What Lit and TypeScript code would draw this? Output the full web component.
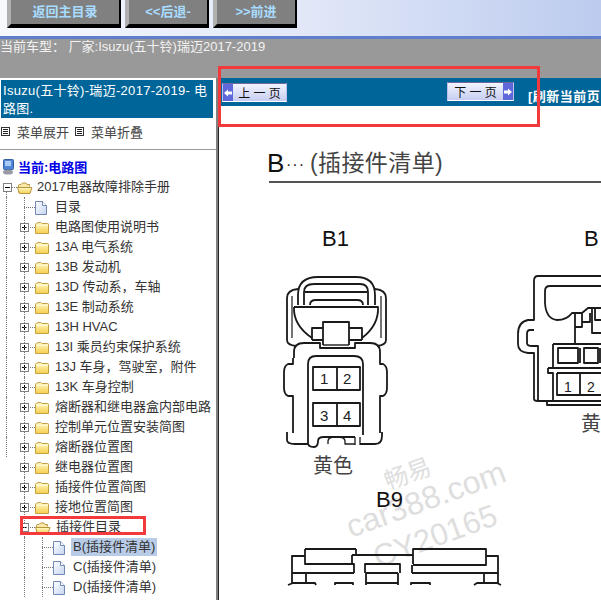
import { LitElement, html, css, svg } from "lit";
import { customElement } from "lit/decorators.js";

const folder = (open: boolean) => svg`<svg class="ic" width=${open ? 16 : 14} height="15" viewBox="0 0 ${open ? 16 : 14} 15">
  <defs><linearGradient id="fg" x1="0" y1="0" x2="0" y2="1"><stop offset="0" stop-color="#fff9c8"/><stop offset="1" stop-color="#f8cf4e"/></linearGradient></defs>
  ${open
    ? svg`<path d="M1.5 12.5V5.5Q1.5 4.5 2.5 4.5H4L5.5 3H9L10 4.5H12.5V6.5" fill="#f8e9a8" stroke="#b8963f"/><path d="M.5 7.5H15L13 13.5H2.5Z" fill="url(#fg)" stroke="#b8963f"/>`
    : svg`<path d="M.5 4.5Q.5 3.5 1.5 3.5L3 2.5H6L7 3.5H12.5Q13.5 3.5 13.5 4.5V13.5H.5Z" fill="url(#fg)" stroke="#c4a040"/><path d="M1.5 5.5H12.5" stroke="#fffbd8"/>`}
</svg>`;

const doc = svg`<svg class="ic" width="12" height="15" viewBox="0 0 12 15">
  <defs><linearGradient id="dg" x1="0" y1="0" x2="1" y2="1"><stop offset="0" stop-color="#ffffff"/><stop offset="1" stop-color="#c4d4f0"/></linearGradient></defs>
  <path d="M.5 1.5H7.5L11.5 5.5V14.5H.5Z" fill="url(#dg)" stroke="#7088b8"/><path d="M7.5 1.5V5.5H11.5" fill="#fff" stroke="#7088b8"/>
</svg>`;

const menuIcon = svg`<svg class="ic" width="9" height="9" viewBox="0 0 9 9"><rect x=".5" y=".5" width="8" height="8" fill="#fff" stroke="#333"/><path d="M2 2.5H7M2 4.5H7M2 6.5H7" stroke="#222"/></svg>`;

const exp = (open: boolean) => svg`<svg class="exp" width="9" height="9" viewBox="0 0 9 9"><rect x=".5" y=".5" width="8" height="8" fill="#fff" stroke="#808080"/><path d=${open ? "M2 4.5H7" : "M2 4.5H7M4.5 2V7"} stroke="#000"/></svg>`;

const l1: [string, boolean][] = [
  ["电路图使用说明书", true], ["13A 电气系统", true], ["13B 发动机", true], ["13D 传动系，车轴", true],
  ["13E 制动系统", true], ["13H HVAC", true], ["13I 乘员约束保护系统", true], ["13J 车身，驾驶室，附件", true],
  ["13K 车身控制", true], ["熔断器和继电器盒内部电路", true], ["控制单元位置安装简图", true], ["熔断器位置图", true],
  ["继电器位置图", false], ["插接件位置简图", false], ["接地位置简图", false],
];

@customElement("app-root")
export class AppRoot extends LitElement {
  static styles = css`
    :host { display: block; width: 601px; height: 600px; overflow: hidden; position: relative; background: #999;
      font-family: "Liberation Sans", "Noto Sans CJK SC", sans-serif; font-size: 13px; color: #333; }
    .top { height: 36px; display: flex; gap: 4px; padding-left: 7px;
      background: linear-gradient(90deg, #f6f8fe, #e2e8f8 50%, #bccbee); border-bottom: 3px solid #5f7ecb; }
    .btn { height: 24px; background: #808080; color: #a8dcff; font-weight: 700; font-size: 13px; line-height: 24px;
      display: flex; justify-content: center; border-left: 4px solid #b0b0b0; border-bottom: 4px solid #000; border-right: 2px solid #000; }
    .b1 { width: 108px; } .b2, .b3 { width: 78px; }
    .car { height: 39px; box-sizing: border-box; font-size: 13px; line-height: 16px; color: #f2f2f2; white-space: pre; }
    .main { display: flex; height: 522px; }
    .left { width: 216px; background: #fff; overflow: hidden; flex: none; }
    .title { margin: 2px 3px 0 1px; height: 38px; background: #006699; color: #fff; font-size: 13px; letter-spacing: .3px; line-height: 18px; padding: 2px 0 0 2px; box-sizing: border-box; }
    .menu { border-bottom: 1px solid #999; display: flex; align-items: center; padding: 0 0 5px 1px; height: 26px; color: #444; }
    .menu .ic { margin-right: 7px; } .menu span { width: 58px; }
    .tree { padding-top: 7px; }
    .row { height: 20px; display: flex; align-items: center; white-space: nowrap; position: relative; line-height: 20px; }
    .ic { flex: none; display: block; }
    .rootline { color: #0000e6; font-weight: 700; padding-left: 3px; gap: 4px; }
    .rootline span { position: relative; top: 1px; }
    .r0 { padding-left: 3px; }
    .r0::after { content: ""; position: absolute; left: 6px; top: 14px; height: 6px; border-left: 1px dotted #777; }
    .r0 .hl { width: 5px; border-top: 1px dotted #777; }
    .r0 .box { flex: none; display: block; }
    .r0 .t { margin-left: 4px; }
    .g0 { width: 12px; height: 20px; flex: none; box-sizing: border-box; }
    .g0.on { border-left: 1px dotted #777; margin-left: 6px; width: 6px; }
    .node { width: 23px; height: 20px; flex: none; position: relative; }
    .node::before { content: ""; position: absolute; left: 12px; top: 0; bottom: 0; border-left: 1px dotted #777; }
    .node.h::after { content: ""; position: absolute; left: 12px; right: 0; top: 10px; border-top: 1px dotted #777; }
    .exp { position: absolute; left: 8px; top: 6px; display: block; }
    .node2 { width: 18px; height: 20px; flex: none; position: relative; }
    .node2::before { content: ""; position: absolute; left: 7px; top: 0; bottom: 0; border-left: 1px dotted #777; }
    .node2::after { content: ""; position: absolute; left: 7px; right: 0; top: 10px; border-top: 1px dotted #777; }
    .l1 .t { margin-left: 6px; }
    .l1 .t.d { margin-left: 8px; }
    .l1 .t.o { margin-left: 5px; }
    .l2 .t { margin-left: 6px; padding: 0 2px; height: 18px; line-height: 18px; }
    .sel { background: #b8cce8; }
    .div { width: 3px; flex: none; background: #808080; border-right: 1px solid #222; box-sizing: border-box; }
    .pane { flex: 1; min-width: 0; background: #fff; overflow: hidden; }
    .bar { height: 28px; background: #006699; display: flex; white-space: nowrap; }
    .pg { width: 65px; height: 19px; box-sizing: border-box; display: flex; align-items: center; font-size: 12px; color: #111;
      background: linear-gradient(180deg, #f2f4fe, #c6cdf0); border: 1px solid #b9bfe6; border-top-color: #6a6aa0; border-bottom-color: #fff; }
    .prev { margin: 5px 0 0 3px; } .next { margin: 4px 0 0 160px; width: 67px; }
    .arr { width: 10px; height: 100%; flex: none; background: #5f68da; display: flex; align-items: center; justify-content: center; }
    .pg .tx { flex: 1; text-align: center; white-space: pre; }
    .refresh { margin-left: 14px; color: #fff; font-weight: 700; font-size: 13px; letter-spacing: .5px; line-height: 38px; }
    svg.draw { display: block; }
    .draw text { font-family: "Liberation Sans", "Noto Sans CJK SC", sans-serif; }
    .red { position: absolute; border: 3px solid #f23a3c; box-sizing: border-box; pointer-events: none; }
    .red.a { left: 218px; top: 66px; width: 322px; height: 61px; }
    .red.b { left: 20px; top: 516px; width: 126px; height: 19px; }
  `;

  private diagram() {
    return svg`<svg class="draw" width="382" height="494" viewBox="219 106 382 494" fill="none" stroke="#1a1a1a" stroke-width="1.8" stroke-linejoin="round">
      <!-- watermark -->
      <g fill="#dedede" stroke="none">
        <text transform="translate(388 490) rotate(-20)" font-size="24">畅易</text>
        <text transform="translate(351 538) rotate(-20)" font-size="32">car388.com</text>
        <text transform="translate(378 568) rotate(-20)" font-size="31">CY20165</text>
      </g>

      <text x="267" y="172" font-size="26" fill="#111" stroke="none">B</text>
      <text x="286" y="170" font-size="16" fill="#222" stroke="none" letter-spacing="1">···</text>
      <text x="310" y="171" font-size="23" fill="#444" stroke="none" letter-spacing=".4">(插接件清单)</text>
      <path d="M269 182H601" stroke-width="1.5"/>

      <text x="322" y="246" font-size="22" fill="#111" stroke="none">B1</text>
      <text x="584" y="246" font-size="22" fill="#111" stroke="none">B</text>
      <text x="376" y="507" font-size="22" fill="#111" stroke="none">B9</text>

      <!-- B1 -->
      <path d="M298 305V295Q298 277 318 277H356Q375 277 375 295V305"/>
      <path d="M304 305V292Q304 284 314 284H360Q368 284 368 292V305"/>
      <path d="M305 292H367M310 305Q310 300 316 300H357Q363 300 363 305"/>
      <path d="M298 289Q287 290 287 298V340Q287 345 296 346"/>
      <path d="M375 289Q386 290 386 298V340Q386 345 377 346"/>
      <path d="M292 296V338M381 296V338" stroke-width="1.2"/>
      <path d="M294 307H378Q379 325 362 338M294 307Q293 325 312 338"/>
      <path d="M323 345V322H349V345"/>
      <path d="M312 340V328H323M349 328H362V340M312 340H323M349 340H362"/>
      <path d="M323 345H349" stroke-width="1.4"/>
      <path d="M304 343H320V348H355V343H370M294 358V352Q294 343 304 343M380 358V352Q380 343 370 343"/>
      <path d="M293 358V364H288Q284 366 284 372V388Q284 394 288 396H293V433M380 358V364H383Q387 366 387 372V388Q387 394 383 396H380V433"/>
      <path d="M287 432V440Q287 444 295 444H308M360 444H375Q382 444 382 436V432"/>
      <path d="M308 364Q308 356 316 356H354Q363 356 363 364V435M308 364V443Q308 447 314 447Q318 447 318 441Q318 437 324 437H355"/>
      <path d="M328 444V441Q328 437 336 437H337Q345 437 345 441V444H355M355 437V445M360 437V445" stroke-width="1.3"/>
      <path d="M313 367H360V390H313ZM337 367V390M313 403H360V426H313ZM337 403V426"/>
      <g fill="#222" stroke="none" font-size="15">
        <text x="320" y="384">1</text><text x="343" y="384">2</text><text x="320" y="421">3</text><text x="343" y="421">4</text>
        <text x="568" y="392" font-size="14" text-anchor="middle">1</text><text x="591" y="392" font-size="14" text-anchor="middle">2</text>
      </g>
      <text x="313" y="473" font-size="20" fill="#444" stroke="none">黄色</text>
      <text x="581" y="431" font-size="20" fill="#444" stroke="none">黄</text>

      <!-- B right -->
      <path d="M601 276H538Q534 276 534 281V320H528Q518 322 518 334V344Q518 352 528 353H534V399Q534 401 538 401H601"/>
      <path d="M534 330H530Q527 330 527 334V343Q527 346 532 346H538V400"/>
      <path d="M547 401V405H601"/>
      <path d="M601 286H550Q545 286 545 291V303Q546 319 557 320Q567 320 572 313H582L588 308H601"/>
      <path d="M575 313V344M575 327H582V313M582 322H590V313M592 308V333H601M595 308V320H601"/>
      <path d="M553 344H601M553 344V367M548 368H601M548 368V373H553V401"/>
      <path d="M558 348H578V363H558ZM584 348H598V363H584ZM580 348V363M600 348V363"/>
      <path d="M557 373H601M557 373V395H601M580 373V395"/>

      <!-- B9 -->
      <path d="M305 549H356M305 549V564H354V573M356 549V555M352 555V564M352 555H413V564M413 555V549H486V565H413M412 565V573"/>
      <path d="M305 556H292V573H354M486 556H498V573H412"/>
      <path d="M365 573V564H400V573M366 573V585M398 573V585M366 573H398M366 583H398"/>
      <path d="M292 573V583H306V573M484 573V583H498V573"/>
      <path d="M288 585L293 583H315L316 585M335 585V583H353V585M411 585V583H430V585M474 585L477 583H497L501 585"/>
    </svg>`;
  }

  render() {
    return html`
      <div class="top">
        <div class="btn b1">返回主目录</div>
        <div class="btn b2">&lt;&lt;后退-</div>
        <div class="btn b3">&gt;&gt;前进</div>
      </div>
      <div class="car">当前车型： 厂家:Isuzu(五十铃)瑞迈2017-2019</div>
      <div class="main">
        <div class="left">
          <div class="title">Isuzu(五十铃)-瑞迈-2017-2019- 电路图.</div>
          <div class="menu">${menuIcon}<span>菜单展开</span>${menuIcon}<span>菜单折叠</span></div>
          <div class="tree">
            <div class="row rootline">
              <svg class="ic" width="11" height="16" viewBox="0 0 11 16"><rect x=".5" y=".5" width="10" height="10" rx="1" fill="#4f86d8" stroke="#33609f"/><rect x="2" y="2" width="6" height="5" fill="#a8ccf4"/><ellipse cx="5" cy="13" rx="5" ry="2.6" fill="#9a9aa6"/></svg>
              <span>当前:电路图</span>
            </div>
            <div class="row r0"><svg class="box" width="9" height="9" viewBox="0 0 9 9"><rect x=".5" y=".5" width="8" height="8" fill="#fff" stroke="#808080"/><path d="M2 4.5H7" stroke="#000"/></svg><span class="hl"></span>${folder(true)}<span class="t">2017电器故障排除手册</span></div>
            <div class="row l1"><span class="g0 on"></span><span class="node h"></span>${doc}<span class="t d">目录</span></div>
            ${l1.map(([t, g]) => html`<div class="row l1"><span class="g0 ${g ? "on" : ""}"></span><span class="node h">${exp(false)}</span>${folder(false)}<span class="t">${t}</span></div>`)}
            <div class="row l1"><span class="g0"></span><span class="node h">${exp(true)}</span>${folder(true)}<span class="t o">插接件目录</span></div>
            ${["B(插接件清单)", "C(插接件清单)", "D(插接件清单)"].map((t, i) => html`<div class="row l2"><span class="g0"></span><span class="node"></span><span class="node2"></span>${doc}<span class="t ${i === 0 ? "sel" : ""}">${t}</span></div>`)}
          </div>
        </div>
        <div class="div"></div>
        <div class="pane">
          <div class="bar">
            <div class="pg prev"><span class="arr"><svg width="8" height="8" viewBox="0 0 8 8"><path d="M0 4L4 .5V2.5H8V5.5H4V7.5Z" fill="#fff"/></svg></span><span class="tx">上 一 页</span></div>
            <div class="pg next"><span class="tx">下 一 页</span><span class="arr"><svg width="8" height="8" viewBox="0 0 8 8"><path d="M8 4L4 .5V2.5H0V5.5H4V7.5Z" fill="#fff"/></svg></span></div>
            <span class="refresh">[刷新当前页</span>
          </div>
          ${this.diagram()}
        </div>
      </div>
      <div class="red a"></div>
      <div class="red b"></div>
    `;
  }
}
